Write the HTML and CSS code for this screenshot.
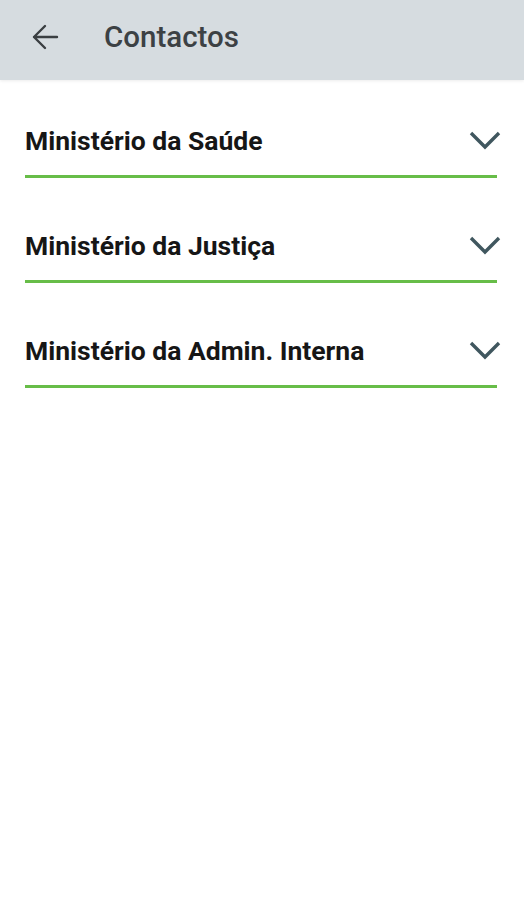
FILE: index.html
```html
<!DOCTYPE html>
<html lang="pt">

<head>
    <meta charset="UTF-8">
    <meta name="viewport" content="width=device-width, initial-scale=1.0">
    <title>Contactos</title>
    <link rel="stylesheet" href="styles.css">
</head>

<body>
    <div class="topbar">
        <div class="back">
            <svg width="28" height="26" viewBox="0 0 28 26">
                <path d="M26 13H3M14 2L3 13l11 11" fill="none" stroke="#3a3f42" stroke-width="2.4" stroke-linecap="round" stroke-linejoin="round"/>
            </svg>
        </div>
        <div class="title">Contactos</div>
    </div>

    <ul class="list">
        <li class="item">
            <span class="name">Ministério da Saúde</span>
            <svg class="chev" width="32" height="20" viewBox="0 0 32 20">
                <path d="M2 3l14 14L30 3" fill="none" stroke="#40575f" stroke-width="3.4"/>
            </svg>
        </li>
        <li class="item">
            <span class="name">Ministério da Justiça</span>
            <svg class="chev" width="32" height="20" viewBox="0 0 32 20">
                <path d="M2 3l14 14L30 3" fill="none" stroke="#40575f" stroke-width="3.4"/>
            </svg>
        </li>
        <li class="item">
            <span class="name">Ministério da Admin. Interna</span>
            <svg class="chev" width="32" height="20" viewBox="0 0 32 20">
                <path d="M2 3l14 14L30 3" fill="none" stroke="#40575f" stroke-width="3.4"/>
            </svg>
        </li>
    </ul>
</body>

</html>
```

FILE: styles.css
```css
* {
    margin: 0;
    padding: 0;
}

body {
    background: #fff;
    font-family: Roboto, "Liberation Sans", sans-serif;
}

.topbar {
    height: 80px;
    background: #d6dce0;
    display: flex;
    align-items: center;
    box-shadow: 0 1px 3px rgba(0, 0, 0, 0.08);
}

.back {
    width: 28px;
    height: 26px;
    margin-left: 31px;
    margin-top: -6px;
}

.back svg {
    display: block;
}

.title {
    margin-left: 45px;
    margin-top: -6px;
    font-size: 29.5px;
    font-weight: 500;
    color: #3c4144;
}

.list {
    list-style: none;
    padding: 0 27px 0 25px;
    display: flex;
    flex-direction: column;
    gap: 7px;
}

.item {
    display: flex;
    align-items: center;
    justify-content: space-between;
    height: 30px;
    padding: 45px 0 20px;
    border-bottom: 3px solid #67bd48;
}

.name {
    font-size: 26.5px;
    font-weight: 700;
    color: #161616;
}

.chev {
    display: block;
    margin-right: -4px;
}
```
